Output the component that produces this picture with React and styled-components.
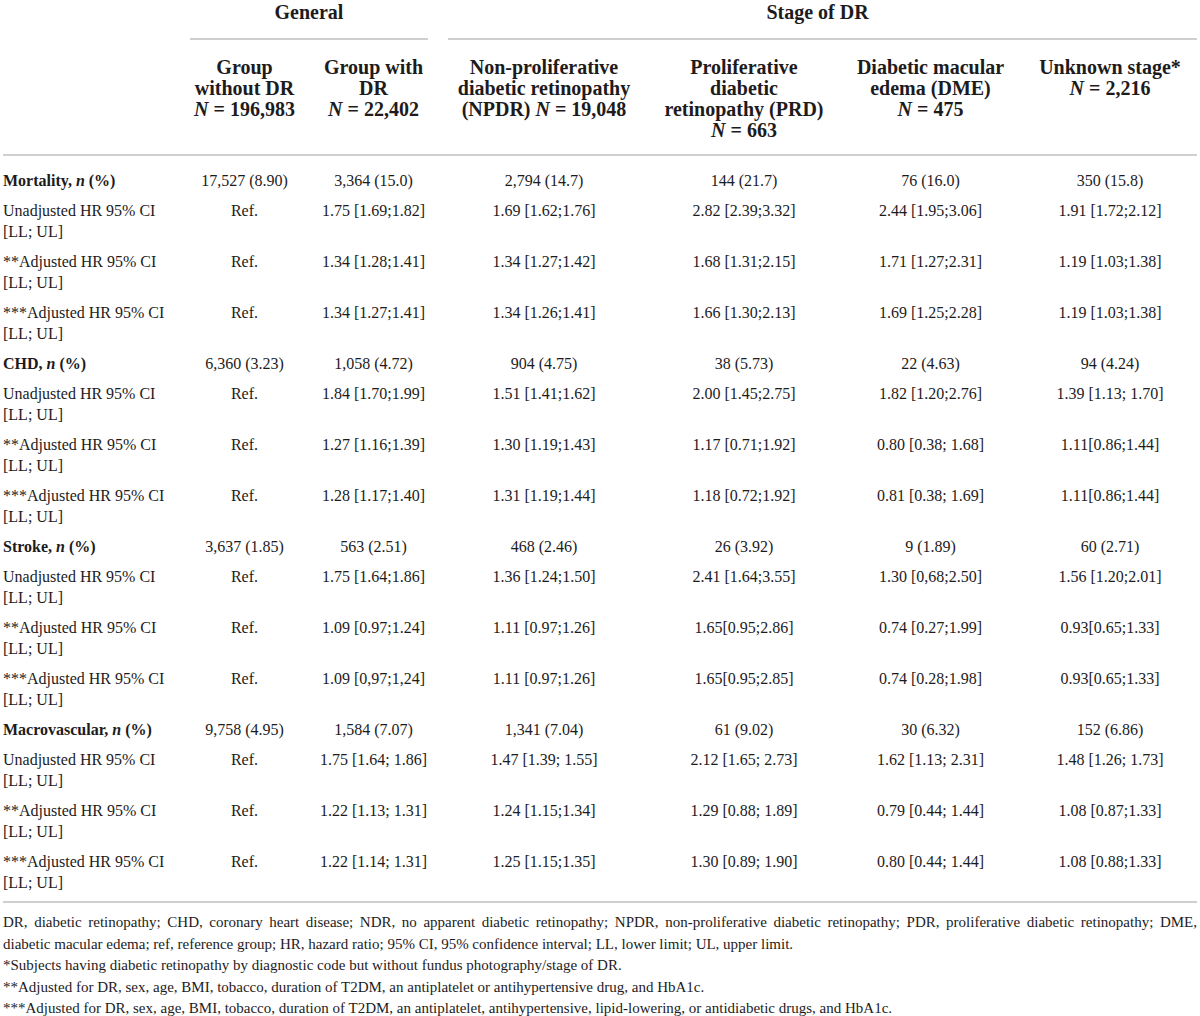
import React from "react";
import styled, { createGlobalStyle } from "styled-components";

const Global = createGlobalStyle`
  html, body { margin: 0; padding: 0; background: #ffffff; }
  body { font-family: "Liberation Serif", "Times New Roman", serif; color: #1d1b1c; }
`;

const Page = styled.div`
  padding: 0 3px;
  width: 1194px;
`;

const Table = styled.table`
  border-collapse: collapse;
  table-layout: fixed;
  width: 1194px;
  font-size: 16px;
  line-height: 21px;
`;

const GroupHead = styled.th`
  padding: 0;
  font-size: 20px;
  line-height: 24px;
  font-weight: 700;
  text-align: center;
  vertical-align: top;
`;

const GroupRule = styled.div`
  height: 2px;
  background: #cfcfcf;
  margin: 14px ${(p) => (p.$last ? "0" : "10px")} 0 10px;
`;

const ColHead = styled.th`
  padding: 17px 6px 13px;
  font-size: 20px;
  line-height: 21px;
  font-weight: 700;
  text-align: center;
  vertical-align: top;
  border-bottom: 2px solid #cfcfcf;
  white-space: nowrap;
`;

const Row = styled.tr`
  & > td {
    padding-top: ${(p) => (p.$first ? "14px" : "5px")};
    padding-bottom: ${(p) => (p.$last ? "8px" : "4px")};
    border-bottom: ${(p) => (p.$last ? "2px solid #cfcfcf" : "none")};
  }
`;

const Label = styled.td`
  padding-left: 0;
  padding-right: 8px;
  text-align: left;
  vertical-align: top;
  white-space: nowrap;
  font-weight: ${(p) => (p.$bold ? 700 : 400)};
`;

const Value = styled.td`
  padding-left: 4px;
  padding-right: 4px;
  text-align: center;
  vertical-align: top;
  white-space: nowrap;
`;

const Notes = styled.div`
  margin-top: 9px;
  font-size: 15px;
  line-height: 21.5px;
`;

const JustLine = styled.div`
  text-align: justify;
  text-align-last: justify;
  white-space: nowrap;
`;

const NoteLine = styled.div`
  text-align: left;
  white-space: nowrap;
`;

const widths = [177, 129, 129, 212, 188, 185, 174];

const groups = [
  {
    name: "Mortality",
    rows: [
      ["17,527 (8.90)", "3,364 (15.0)", "2,794 (14.7)", "144 (21.7)", "76 (16.0)", "350 (15.8)"],
      ["Ref.", "1.75 [1.69;1.82]", "1.69 [1.62;1.76]", "2.82 [2.39;3.32]", "2.44 [1.95;3.06]", "1.91 [1.72;2.12]"],
      ["Ref.", "1.34 [1.28;1.41]", "1.34 [1.27;1.42]", "1.68 [1.31;2.15]", "1.71 [1.27;2.31]", "1.19 [1.03;1.38]"],
      ["Ref.", "1.34 [1.27;1.41]", "1.34 [1.26;1.41]", "1.66 [1.30;2.13]", "1.69 [1.25;2.28]", "1.19 [1.03;1.38]"],
    ],
  },
  {
    name: "CHD",
    rows: [
      ["6,360 (3.23)", "1,058 (4.72)", "904 (4.75)", "38 (5.73)", "22 (4.63)", "94 (4.24)"],
      ["Ref.", "1.84 [1.70;1.99]", "1.51 [1.41;1.62]", "2.00 [1.45;2.75]", "1.82 [1.20;2.76]", "1.39 [1.13; 1.70]"],
      ["Ref.", "1.27 [1.16;1.39]", "1.30 [1.19;1.43]", "1.17 [0.71;1.92]", "0.80 [0.38; 1.68]", "1.11[0.86;1.44]"],
      ["Ref.", "1.28 [1.17;1.40]", "1.31 [1.19;1.44]", "1.18 [0.72;1.92]", "0.81 [0.38; 1.69]", "1.11[0.86;1.44]"],
    ],
  },
  {
    name: "Stroke",
    rows: [
      ["3,637 (1.85)", "563 (2.51)", "468 (2.46)", "26 (3.92)", "9 (1.89)", "60 (2.71)"],
      ["Ref.", "1.75 [1.64;1.86]", "1.36 [1.24;1.50]", "2.41 [1.64;3.55]", "1.30 [0,68;2.50]", "1.56 [1.20;2.01]"],
      ["Ref.", "1.09 [0.97;1.24]", "1.11 [0.97;1.26]", "1.65[0.95;2.86]", "0.74 [0.27;1.99]", "0.93[0.65;1.33]"],
      ["Ref.", "1.09 [0,97;1,24]", "1.11 [0.97;1.26]", "1.65[0.95;2.85]", "0.74 [0.28;1.98]", "0.93[0.65;1.33]"],
    ],
  },
  {
    name: "Macrovascular",
    rows: [
      ["9,758 (4.95)", "1,584 (7.07)", "1,341 (7.04)", "61 (9.02)", "30 (6.32)", "152 (6.86)"],
      ["Ref.", "1.75 [1.64; 1.86]", "1.47 [1.39; 1.55]", "2.12 [1.65; 2.73]", "1.62 [1.13; 2.31]", "1.48 [1.26; 1.73]"],
      ["Ref.", "1.22 [1.13; 1.31]", "1.24 [1.15;1.34]", "1.29 [0.88; 1.89]", "0.79 [0.44; 1.44]", "1.08 [0.87;1.33]"],
      ["Ref.", "1.22 [1.14; 1.31]", "1.25 [1.15;1.35]", "1.30 [0.89; 1.90]", "0.80 [0.44; 1.44]", "1.08 [0.88;1.33]"],
    ],
  },
];

const subLabels = ["Unadjusted HR 95% CI", "**Adjusted HR 95% CI", "***Adjusted HR 95% CI"];

const N = () => <i>N</i>;

export default function App() {
  return (
    <Page>
      <Global />
      <Table>
        <colgroup>
          {widths.map((w, i) => (
            <col key={i} style={{ width: w }} />
          ))}
        </colgroup>
        <thead>
          <tr>
            <GroupHead />
            <GroupHead colSpan={2}>
              General
              <GroupRule />
            </GroupHead>
            <GroupHead colSpan={4}>
              Stage of DR
              <GroupRule $last />
            </GroupHead>
          </tr>
          <tr>
            <ColHead />
            <ColHead>
              Group
              <br />
              without DR
              <br />
              <N /> = 196,983
            </ColHead>
            <ColHead>
              Group with
              <br />
              DR
              <br />
              <N /> = 22,402
            </ColHead>
            <ColHead>
              Non-proliferative
              <br />
              diabetic retinopathy
              <br />
              (NPDR) <N /> = 19,048
            </ColHead>
            <ColHead>
              Proliferative
              <br />
              diabetic
              <br />
              retinopathy (PRD)
              <br />
              <N /> = 663
            </ColHead>
            <ColHead>
              Diabetic macular
              <br />
              edema (DME)
              <br />
              <N /> = 475
            </ColHead>
            <ColHead>
              Unknown stage*
              <br />
              <N /> = 2,216
            </ColHead>
          </tr>
        </thead>
        <tbody>
          {groups.map((g, gi) =>
            g.rows.map((r, ri) => (
              <Row
                key={`${gi}-${ri}`}
                $first={gi === 0 && ri === 0}
                $last={gi === groups.length - 1 && ri === g.rows.length - 1}
              >
                {ri === 0 ? (
                  <Label $bold>
                    {g.name}, <i>n</i> (%)
                  </Label>
                ) : (
                  <Label>
                    {subLabels[ri - 1]}
                    <br />
                    [LL; UL]
                  </Label>
                )}
                {r.map((v, vi) => (
                  <Value key={vi}>{v}</Value>
                ))}
              </Row>
            ))
          )}
        </tbody>
      </Table>
      <Notes>
        <JustLine>
          DR, diabetic retinopathy; CHD, coronary heart disease; NDR, no apparent diabetic retinopathy; NPDR,
          non-proliferative diabetic retinopathy; PDR, proliferative diabetic retinopathy; DME,
        </JustLine>
        <NoteLine>
          diabetic macular edema; ref, reference group; HR, hazard ratio; 95% CI, 95% confidence interval; LL, lower
          limit; UL, upper limit.
        </NoteLine>
        <NoteLine>*Subjects having diabetic retinopathy by diagnostic code but without fundus photography/stage of DR.</NoteLine>
        <NoteLine>
          **Adjusted for DR, sex, age, BMI, tobacco, duration of T2DM, an antiplatelet or antihypertensive drug, and
          HbA1c.
        </NoteLine>
        <NoteLine>
          ***Adjusted for DR, sex, age, BMI, tobacco, duration of T2DM, an antiplatelet, antihypertensive,
          lipid-lowering, or antidiabetic drugs, and HbA1c.
        </NoteLine>
      </Notes>
    </Page>
  );
}
